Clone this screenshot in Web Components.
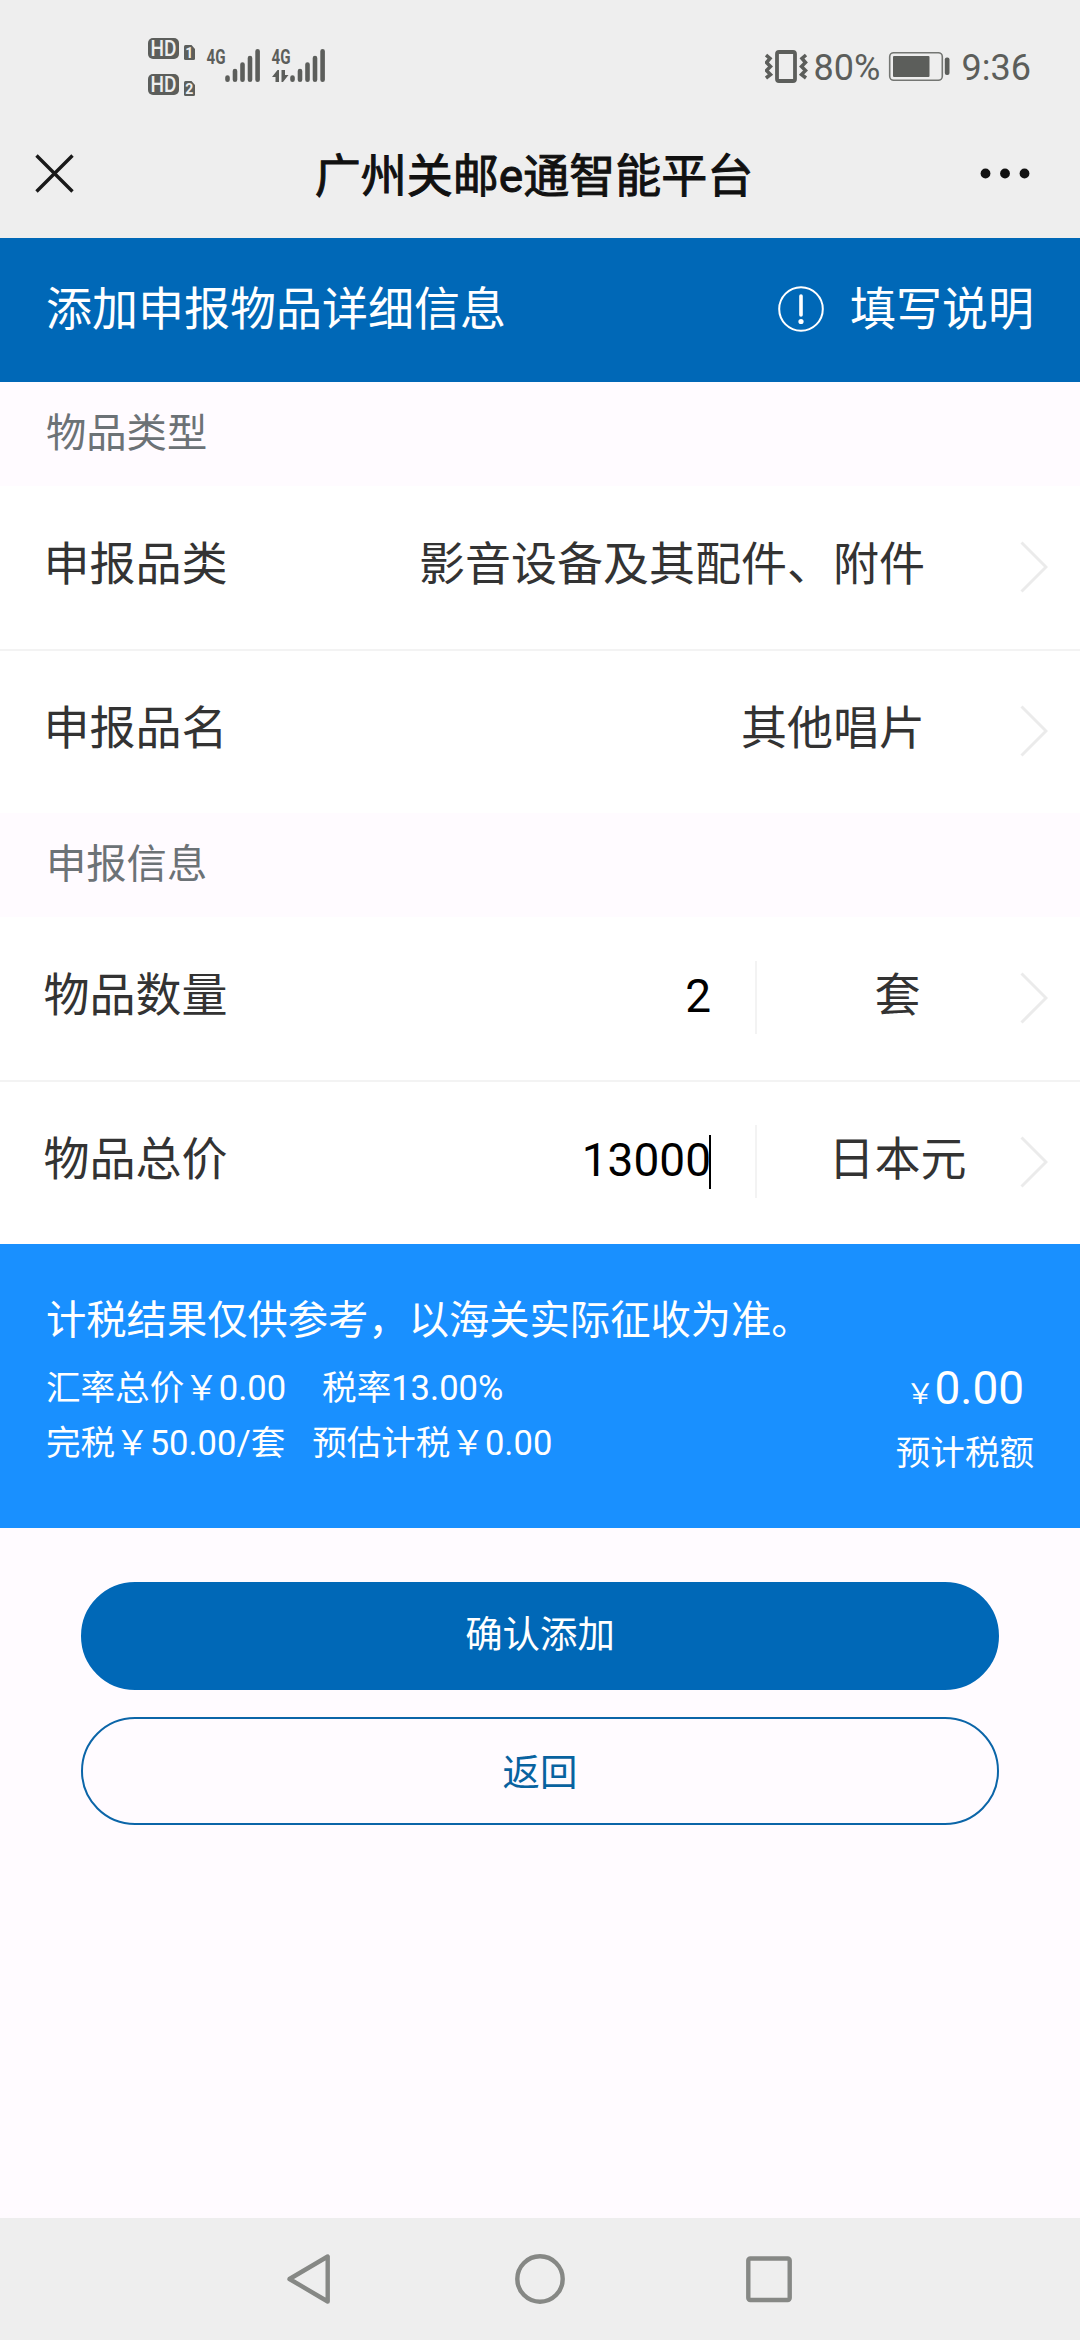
<!DOCTYPE html>
<html lang="zh-CN">
<head>
<meta charset="utf-8">
<title>广州关邮e通智能平台</title>
<style>
  html, body { margin: 0; }
  body { width: 1080px; height: 2340px; overflow: hidden; background: #fffbff; font-family: Roboto, "Noto Sans CJK SC", sans-serif; }
</style>
</head>
<body>
<declare-page></declare-page>
<script>
const define = (name, html, setup) => {
  const template = document.createElement('template');
  template.innerHTML = html;
  customElements.define(name, class extends HTMLElement {
    constructor() {
      super();
      this.attachShadow({ mode: 'open' }).append(template.content.cloneNode(true));
      if (setup) setup(this);
    }
  });
};

define('status-bar', `
<style>
  :host { display: flex; height: 110px; box-sizing: border-box; padding: 30px 49px 0 140px; background: #eee; color: #5c5e5b; align-items: flex-start; }
  svg { display: block; flex: none; }
  text { font-family: Roboto, sans-serif; }
  .right { display: flex; margin-left: auto; align-items: flex-start; }
  span { font-size: 36px; line-height: 40px; margin-top: 18px; white-space: nowrap; }
  .pct { margin-left: 4px; width: 71px; }
  .time { margin-left: 9px; }
</style>
<svg width="190" height="70" viewBox="140 30 190 70" fill="#5c5e5b">
  <rect x="148" y="38" width="31" height="21" rx="5"/>
  <text x="163.500" y="56" font-size="21.500" font-weight="500" text-anchor="middle" fill="#eee" textLength="26" lengthAdjust="spacingAndGlyphs">HD</text>
  <path d="M185.500 45h6l3.500 4v9.500q0 1.500-1.500 1.500h-8q-1.500 0-1.500-1.500v-12q0-1.500 1.500-1.500z"/>
  <text x="189.300" y="57.500" font-size="14" font-weight="700" text-anchor="middle" fill="#eee">1</text>
  <rect x="148" y="74" width="31" height="21" rx="5"/>
  <text x="163.500" y="92" font-size="21.500" font-weight="500" text-anchor="middle" fill="#eee" textLength="26" lengthAdjust="spacingAndGlyphs">HD</text>
  <path d="M185.500 81h6l3.500 4v9.500q0 1.500-1.500 1.500h-8q-1.500 0-1.500-1.500v-12q0-1.500 1.500-1.500z"/>
  <text x="189.300" y="93.500" font-size="14" font-weight="700" text-anchor="middle" fill="#eee">2</text>
  <text x="206.500" y="64" font-size="20.500" font-weight="700" textLength="19" lengthAdjust="spacingAndGlyphs">4G</text>
  <text x="271.500" y="64" font-size="20.500" font-weight="700" textLength="19" lengthAdjust="spacingAndGlyphs">4G</text>
  <g stroke="#5c5e5b" stroke-width="4.600" stroke-linecap="round">
    <path d="M227.500 77.500v2.200M235 71v8.700M242.500 64.500v15.200M250 58v21.700M257.600 51.300v28.400"/>
    <path d="M292.500 77.500v2.200M300 71v8.700M307.500 64.500v15.200M315 58v21.700M322.600 51.300v28.400"/>
  </g>
  <path d="M272 77l5.500-7h1.500v12h-3.500v-5zM281.500 70h3.500v5h3.500l-5.500 7h-1.500z"/>
</svg>
<div class="right">
  <svg width="45" height="60" viewBox="765 30 45 60" fill="none" stroke="#5c5e5b" stroke-width="3.800">
    <rect x="777" y="52" width="18" height="29" rx="2"/>
    <path stroke-width="3.500" d="M766 55l4 3.500-3.500 4 4 4-4 4 4 4-4.500 3.500M806 55l-4 3.500 3.500 4-4 4 4 4-4 4 4.500 3.500"/>
  </svg>
  <span class="pct">80%</span>
  <svg width="68" height="60" viewBox="885 30 68 60" fill="#5c5e5b">
    <rect x="889.700" y="52.700" width="52.600" height="27.600" rx="4" fill="none" stroke="#747673" stroke-width="1.600"/>
    <rect x="893" y="56" width="36.500" height="21" rx="1"/>
    <rect x="944.800" y="57.500" width="4.700" height="17.500" rx="2"/>
  </svg>
  <span class="time">9:36</span>
</div>`);

define('title-bar', `
<style>
  :host { display: grid; grid-template-columns: 110px 1fr 110px; align-items: center; height: 128px; background: #eee; color: #111; }
  h1 { margin: 0 12px 0 0; padding-top: 4px; text-align: center; font-size: 46px; line-height: 60px; font-weight: 400; -webkit-text-stroke: 1px #111; }
  svg { display: block; }
</style>
<svg width="110" height="128" viewBox="0 110 110 128" fill="none" stroke="#191919" stroke-width="3.400"><path d="M36.500 155.500l36 36M72.500 155.500l-36 36"/></svg>
<h1><slot></slot></h1>
<svg width="110" height="128" viewBox="970 110 110 128" fill="#111"><circle cx="985.500" cy="173.500" r="4.900"/><circle cx="1005" cy="173.500" r="4.900"/><circle cx="1024.500" cy="173.500" r="4.900"/></svg>`);

define('page-banner', `
<style>
  :host { display: flex; align-items: center; height: 144px; box-sizing: border-box; padding: 0 46px 2px; background: #0068b7; color: #fff; font-size: 46px; line-height: 60px; }
  .help { display: flex; align-items: center; gap: 26px; margin-left: auto; }
  svg { display: block; }
</style>
<slot></slot>
<div class="help">
  <svg width="46" height="46" viewBox="0 0 46 46" fill="none" stroke="#fff"><circle cx="23" cy="23" r="21.800" stroke-width="2"/><path d="M23 10v19" stroke-width="3.600" stroke-linecap="round"/><circle cx="23" cy="35.500" r="2.600" fill="#fff" stroke="none"/></svg>
  <slot name="help"></slot>
</div>`);

define('section-title', `
<style>
  :host { display: flex; align-items: center; height: 104px; box-sizing: border-box; padding: 0 0 1px 46px; background: #fffbff; color: #6c7276; font-size: 40.300px; line-height: 50px; }
</style><slot></slot>`);

define('form-row', `
<style>
  :host { display: flex; align-items: center; height: 163px; box-sizing: border-box; padding: 0 32px 0 43.500px; background: #fff; color: #333; font-size: 46px; line-height: 60px; }
  :host([divided]) { height: 165px; border-bottom: 2px solid #f3f3f3; }
  .t { padding-bottom: 8px; white-space: nowrap; }
  .value { margin-left: auto; }
  svg { display: block; flex: none; margin: 0 0 2px 95px; }
  :host([split]) .value { color: #000; display: flex; padding-bottom: 6px; }
  .unit { display: none; }
  :host([split]) .unit { display: block; box-sizing: border-box; width: 283px; height: 73px; margin: 0 0 3px 44px; padding-top: 4px; border-left: 2px solid #f3f3f3; text-align: center; }
  :host([split]) svg { margin-left: -18px; }
</style>
<div class="t"><slot name="label"></slot></div>
<div class="t value"><slot></slot></div>
<div class="unit"><slot name="unit"></slot></div>
<svg width="28" height="52" viewBox="0 0 28 52" fill="none" stroke="#ebebeb" stroke-width="3"><path d="M1.500 1.500L26 26 1.500 50.500"/></svg>`);

define('text-caret', `
<style>:host { display: block; width: 2px; height: 54px; margin: 5px 0 0 -2px; background: #000; }</style>`);

define('tax-panel', `
<style>
  :host { display: flex; justify-content: space-between; height: 283.500px; box-sizing: border-box; padding: 52px 46px 0; background: #1990ff; color: #fff; font-size: 34.560px; white-space: nowrap; }
  .note { font-size: 40.300px; line-height: 50px; margin-bottom: 15px; }
  .line { line-height: 55px; }
  .sum { display: flex; flex-direction: column; align-items: center; padding-top: 62px; }
  .price { font-size: 46px; line-height: 60px; }
  small { font-size: 28.800px; }
  .cap { line-height: 50px; margin-top: 4px; }
  .gap1 { margin-right: 36px; } .gap2 { margin-right: 27px; }
</style>
<div>
  <div class="note">计税结果仅供参考，以海关实际征收为准。</div>
  <div class="line"><span class="gap1">汇率总价￥0.00</span><span>税率13.00%</span></div>
  <div class="line"><span class="gap2">完税￥50.00/套</span><span>预估计税￥0.00</span></div>
</div>
<div class="sum"><div class="price"><small>￥</small>0.00</div><div class="cap">预计税额</div></div>`);

define('pill-button', `
<style>
  :host { display: flex; align-items: center; justify-content: center; box-sizing: border-box; height: 108px; border: 2px solid #0b65a8; border-radius: 54px; font-size: 37.440px; line-height: 50px; color: #08629f; }
  :host([primary]) { background: #0068b7; border-color: #0068b7; color: #fff; }
  span { padding-top: 4px; }
  :host([primary]) span { padding: 0 0 2px; }
</style><span><slot></slot></span>`);

define('nav-bar', `
<style>
  :host { display: flex; align-items: center; justify-content: center; gap: 169px; height: 122px; background: #eee; }
  svg { display: block; }
</style>
<svg width="60" height="60" viewBox="281 2249 60 60" fill="none" stroke="#868885" stroke-width="4.400" stroke-linejoin="round"><path d="M327.700 2256.500v45L289.500 2279z"/></svg>
<svg width="60" height="60" viewBox="510 2249 60 60" fill="none" stroke="#868885" stroke-width="4.400"><circle cx="540" cy="2279" r="22.700"/></svg>
<svg width="60" height="60" viewBox="739 2249 60 60" fill="none" stroke="#868885" stroke-width="4.400"><rect x="748.300" y="2258.500" width="41.400" height="41.500" rx="2"/></svg>`);

define('declare-page', `
<style>
  :host { display: flex; flex-direction: column; width: 1080px; height: 2340px; }
  :host > * { flex: none; }
  .actions { display: flex; flex-direction: column; gap: 27px; padding: 54.500px 81px 0; }
  nav-bar { margin-top: auto; }
</style>
<status-bar></status-bar>
<title-bar>广州关邮e通智能平台</title-bar>
<page-banner>添加申报物品详细信息<span slot="help">填写说明</span></page-banner>
<section-title>物品类型</section-title>
<form-row divided><span slot="label">申报品类</span>影音设备及其配件、附件</form-row>
<form-row style="height:162px"><span slot="label">申报品名</span>其他唱片</form-row>
<section-title>申报信息</section-title>
<form-row divided split><span slot="label">物品数量</span>2<span slot="unit">套</span></form-row>
<form-row split style="height:162px"><span slot="label">物品总价</span>13000<text-caret></text-caret><span slot="unit">日本元</span></form-row>
<tax-panel></tax-panel>
<div class="actions">
  <pill-button primary>确认添加</pill-button>
  <pill-button>返回</pill-button>
</div>
<nav-bar></nav-bar>`);
</script>
</body>
</html>
